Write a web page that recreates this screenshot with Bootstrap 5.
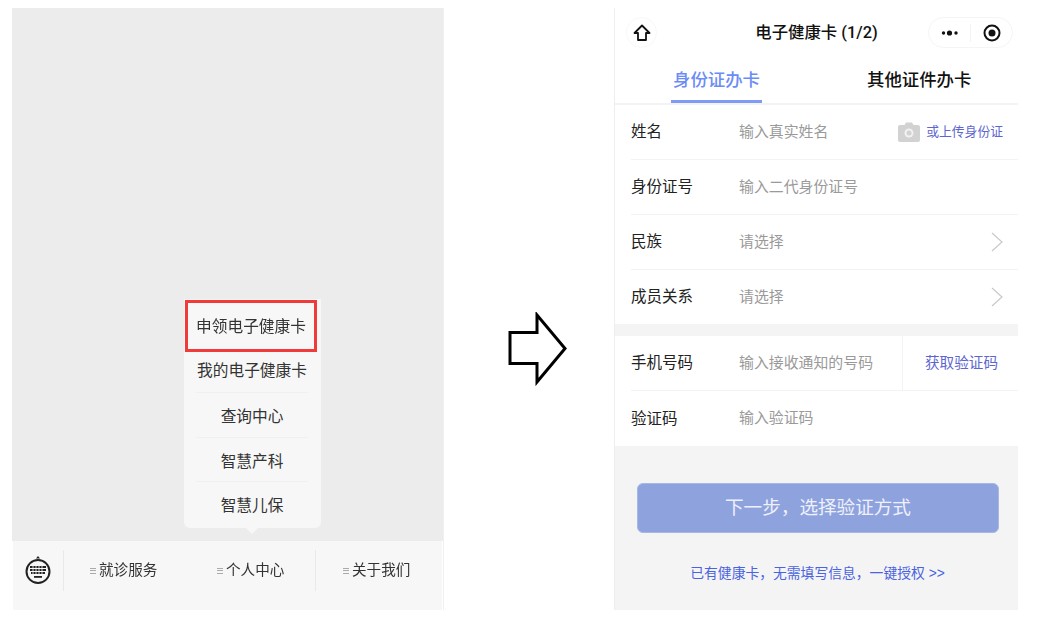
<!doctype html>
<html lang="zh"><head><meta charset="utf-8">
<link href="https://cdn.jsdelivr.net/npm/bootstrap@5.3.0/dist/css/bootstrap.min.css" rel="stylesheet">
<style>
html,body{height:100%;background:#fff;overflow:hidden}
body{font-family:"Liberation Sans","Noto Sans CJK SC",sans-serif;color:#222}
.board{padding:8px 0 0 12px;height:610px;filter:blur(.3px)}
.shot-a{width:432px;height:602px;border-right:1px solid #f0f0f0}
.stage{background:#ececec;height:533px;padding:291px 0 0 172px}
.pop{width:137px;height:229px;background:#f7f7f7;border-radius:0 0 6px 6px;position:relative;padding:1px 0 0 1px;font-size:15.7px;color:#333;text-align:center}
.pop::after{content:"";position:absolute;left:61px;bottom:-6px;border:7px solid transparent;border-bottom:0;border-top-color:#f7f7f7}
.picked{width:132px;height:52px;border:3px solid #f13a3a;line-height:48px;white-space:nowrap;position:relative}
.pick-row{height:44.6px;line-height:47px;margin:0 12px 0 11px;width:112px;white-space:nowrap}
.picked+.pick-row{margin-top:-4.6px}
.pick-row+.pick-row{border-top:1px solid #f0f0f0}
.tabbar{background:#f7f7f7;height:69px;margin:0 1px;font-size:14.6px;color:#333}
.kb{width:51px;height:41px;border-right:1px solid #e9e9e9;margin-top:9px;flex:none}
.bar-item{height:41px;margin-top:9px;white-space:nowrap;padding-top:1px}
.bar-i1{width:126px;padding-left:26px}
.bar-i2{width:126px;padding-left:27px;border-right:1px solid #e9e9e9}
.bar-i3{padding-left:27px}
.mini{width:6px;height:6px;margin-right:3px;flex:none;background:repeating-linear-gradient(#aaa 0 1px,transparent 1px 2.5px)}
.arrow-col{width:170px;padding:304px 0 0 64px}
.shot-b{width:404px;height:602px;background:#f4f4f4;border-left:1px solid #eee}
.top-area{background:#fff;height:95px}
.head{height:48px;position:relative}
.home{width:31px;height:31px;border:1px solid #f8f8f8;border-radius:50%;margin:9px 0 0 11px;flex:none}
.ttl{font-family:Roboto,"Noto Sans CJK SC",sans-serif;font-size:16.4px;font-weight:500;color:#111;position:absolute;left:0;right:0;top:13px;text-align:center;line-height:24px}
.capsule{width:85px;height:31px;border:1px solid #f5f5f5;border-radius:16px;position:absolute;left:313px;top:9px}
.cap-l{width:42px;height:18px;border-right:1px solid #f3f3f3}
.cap-dot{margin-left:12px}
.tabs-row{height:47px;font-size:17.4px;font-weight:500;color:#111}
.tab-on{color:#6c8cf5;width:91px;margin-left:56px;height:47px;border-bottom:3px solid #7f9bf3;line-height:48px;text-align:center;white-space:nowrap}
.tab-off{width:106px;margin-left:105px;line-height:48px;white-space:nowrap}
.tab-rule{height:2px;background:#f3f3f3}
.grp{background:#fff}
.frow{height:55px;margin-left:16px;display:flex;align-items:center;font-size:15.5px;border-bottom:1px solid #f3f3f3}
.frow.endrow{border-bottom:0}
.frow.short{height:54px}
.flabel{width:108px;flex:none}
.fval{color:#9a9a9a;font-size:14.9px;flex:1;white-space:nowrap}
.upl{font-size:12.8px;color:#5d66cf;white-space:nowrap;padding-right:15px}
.cam{margin-right:6px}
.chev{margin-right:15px}
.code{width:116px;height:100%;border-left:1px solid #f3f3f3;color:#5d66cf;font-size:14.6px;flex:none;padding-left:22px;line-height:54px;white-space:nowrap}
.gap-band{height:12px;background:#f4f4f4}
.go{display:block;width:362px;height:50px;margin:37px 0 0 22px;background:#8ea3de;border:1px solid #a9b8e2;border-radius:6px;color:#eef1fb;font-size:18.6px;padding:0;line-height:48px}
.go:hover{background:#8ea3de;color:#eef1fb}
.auth{color:#4a63e0;font-size:13.8px;text-align:center;margin-top:31px;line-height:20px;text-decoration:none;display:block;padding-left:2px;white-space:nowrap}
</style></head>
<body>
<div class="board d-flex align-items-start">
  <section class="shot-a">
    <div class="stage">
      <div class="pop">
        <div class="picked">申领电子健康卡</div>
        <div class="pick-row">我的电子健康卡</div>
        <div class="pick-row">查询中心</div>
        <div class="pick-row">智慧产科</div>
        <div class="pick-row">智慧儿保</div>
      </div>
    </div>
    <div class="tabbar d-flex align-items-start">
      <div class="kb d-flex justify-content-center align-items-center">
        <svg width="28" height="34" viewBox="0 0 28 34" fill="none"><path d="M12 4.500 14 2l2 2.500z" fill="#222"/><circle cx="14" cy="17.500" r="11.500" stroke="#222" stroke-width="2"/><g fill="#222"><rect x="6" y="12" width="16" height="2"/><rect x="6" y="15" width="16" height="2"/><rect x="7" y="18" width="14" height="2"/><rect x="10" y="22" width="8" height="1.800"/></g><g stroke="#fff" stroke-width=".8"><path d="M9 11.500v9M12 11.500v9M15 11.500v9M18 11.500v9"/></g></svg>
      </div>
      <div class="bar-item bar-i1 d-flex align-items-center"><span class="mini"></span>就诊服务</div>
      <div class="bar-item bar-i2 d-flex align-items-center"><span class="mini"></span>个人中心</div>
      <div class="bar-item bar-i3 d-flex align-items-center"><span class="mini"></span>关于我们</div>
    </div>
  </section>

  <div class="arrow-col">
    <svg width="60" height="74" viewBox="0 0 60 74" fill="none"><path d="M2 20.500H29V3L57 36.500 29 70V51.500H2z" stroke="#000" stroke-width="3" fill="#fff"/></svg>
  </div>

  <section class="shot-b">
    <div class="top-area">
      <div class="head d-flex">
        <div class="home d-flex justify-content-center align-items-center">
          <svg width="18" height="18" viewBox="0 0 18 18" fill="none"><path d="M9 1.500 1.500 9H5v7h8V9h3.500z" stroke="#111" stroke-width="1.800" stroke-linejoin="round"/></svg>
        </div>
        <div class="ttl">电子健康卡 (1/2)</div>
        <div class="capsule d-flex align-items-center">
          <div class="cap-l d-flex align-items-center justify-content-center">
            <svg width="18" height="6" viewBox="0 0 18 6" fill="#111"><circle cx="2.500" cy="3" r="1.700"/><circle cx="8.500" cy="3" r="2.600"/><circle cx="15" cy="3" r="1.700"/></svg>
          </div>
          <svg class="cap-dot" width="18" height="18" viewBox="0 0 18 18" fill="none"><circle cx="9" cy="9" r="7.500" stroke="#111" stroke-width="2"/><circle cx="9" cy="9" r="3.500" fill="#111"/></svg>
        </div>
      </div>
      <div class="tabs-row d-flex">
        <div class="tab-on">身份证办卡</div>
        <div class="tab-off">其他证件办卡</div>
      </div>
    </div>
    <div class="tab-rule"></div>
    <div class="grp">
      <div class="frow"><span class="flabel">姓名</span><span class="fval">输入真实姓名</span>
        <svg class="cam" width="22" height="20" viewBox="0 0 22 20"><path d="M2 3h4.500L8 .5h6L15.500 3H20a2 2 0 0 1 2 2v13a2 2 0 0 1-2 2H2a2 2 0 0 1-2-2V5a2 2 0 0 1 2-2z" fill="#d2d2d2"/><circle cx="11" cy="11" r="4.500" fill="#f2f2f2"/><circle cx="11" cy="11" r="2.500" fill="#d2d2d2"/></svg>
        <span class="upl">或上传身份证</span></div>
      <div class="frow"><span class="flabel">身份证号</span><span class="fval">输入二代身份证号</span></div>
      <div class="frow"><span class="flabel">民族</span><span class="fval">请选择</span>
        <svg class="chev" width="12" height="20" viewBox="0 0 12 20" fill="none"><path d="M1 1l10 9-10 9" stroke="#c9c9c9" stroke-width="1.200"/></svg></div>
      <div class="frow endrow short"><span class="flabel">成员关系</span><span class="fval">请选择</span>
        <svg class="chev" width="12" height="20" viewBox="0 0 12 20" fill="none"><path d="M1 1l10 9-10 9" stroke="#c9c9c9" stroke-width="1.200"/></svg></div>
    </div>
    <div class="gap-band"></div>
    <div class="grp">
      <div class="frow"><span class="flabel">手机号码</span><span class="fval">输入接收通知的号码</span><span class="code">获取验证码</span></div>
      <div class="frow endrow"><span class="flabel">验证码</span><span class="fval">输入验证码</span></div>
    </div>
    <button class="btn go" type="button">下一步，选择验证方式</button>
    <a class="auth" href="#">已有健康卡，无需填写信息，一键授权 &gt;&gt;</a>
  </section>
</div>
</body></html>
